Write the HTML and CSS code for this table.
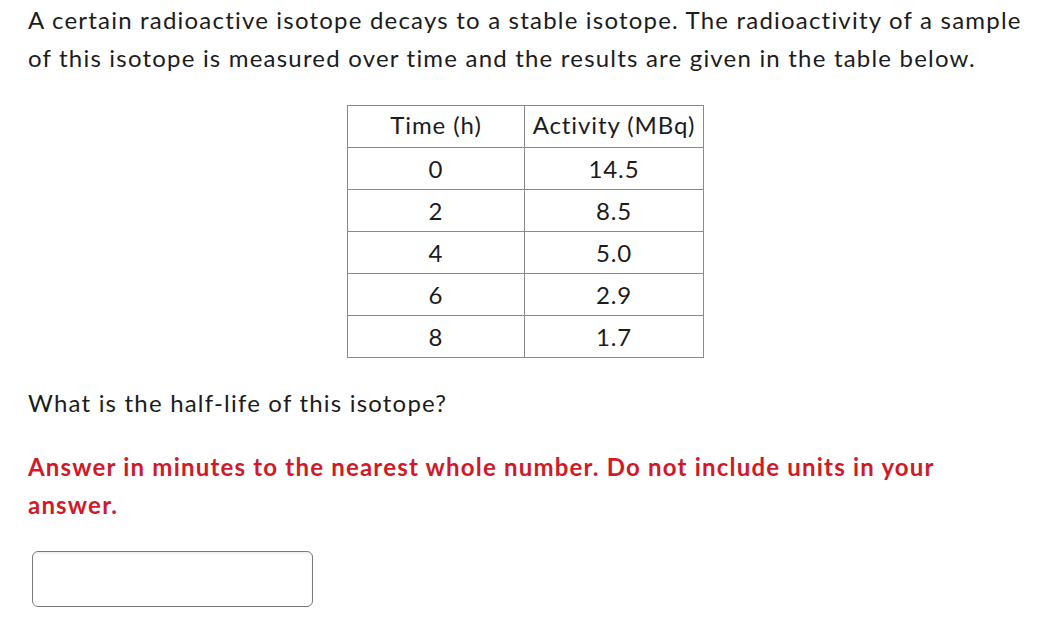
FILE: index.html
```html
<!DOCTYPE html>
<html>
<head>
<meta charset="utf-8">
<link rel="stylesheet" href="styles.css">
</head>
<body>
<div class="page">
  <p class="intro">A certain radioactive isotope decays to a stable isotope. The radioactivity of a sample of this isotope is measured over time and the results are given in the table below.</p>
  <table class="data">
    <thead>
      <tr><th class="c1">Time (h)</th><th class="c2">Activity (MBq)</th></tr>
    </thead>
    <tbody>
      <tr><td>0</td><td>14.5</td></tr>
      <tr><td>2</td><td>8.5</td></tr>
      <tr><td>4</td><td>5.0</td></tr>
      <tr><td>6</td><td>2.9</td></tr>
      <tr><td>8</td><td>1.7</td></tr>
    </tbody>
  </table>
  <p class="question">What is the half-life of this isotope?</p>
  <p class="instruction">Answer in minutes to the nearest whole number. Do not include units in your answer.</p>
  <input class="answer" type="text" aria-label="answer">
</div>
</body>
</html>
```

FILE: styles.css
```css
html, body {
  margin: 0;
  padding: 0;
  background: #ffffff;
}
.page {
  padding: 1px 28px 0 28px;
  font-family: Lato, "Open Sans", sans-serif;
  font-size: 24px;
  line-height: 38px;
  letter-spacing: 1.2px;
  color: #1c1c1c;
}
.intro {
  margin: 0 0 28px 0;
}
.data {
  border-collapse: collapse;
  margin: 0 auto;
  letter-spacing: 0.9px;
}
.data th, .data td {
  border: 1px solid #8a8a8a;
  font-weight: 400;
  text-align: center;
  height: 42px;
  padding: 0 2px;
  line-height: 36px;
  box-sizing: border-box;
}
.data th {
  padding-bottom: 3px;
}
.data .c1 { width: 177px; }
.data .c2 { width: 179px; }
.question {
  margin: 26px 0 0 0;
}
.instruction {
  margin: 26px 0 0 0;
  color: #d01a28;
  font-weight: 700;
  padding-right: 80px;
}
.answer {
  display: block;
  margin: 27px 0 0 4px;
  width: 281px;
  height: 56px;
  box-sizing: border-box;
  border: 1px solid #7a7a7a;
  border-radius: 6px;
  box-shadow: inset 0 2px 2px rgba(0,0,0,0.05);
  background: #fff;
  font-family: inherit;
  font-size: 20px;
}
```
